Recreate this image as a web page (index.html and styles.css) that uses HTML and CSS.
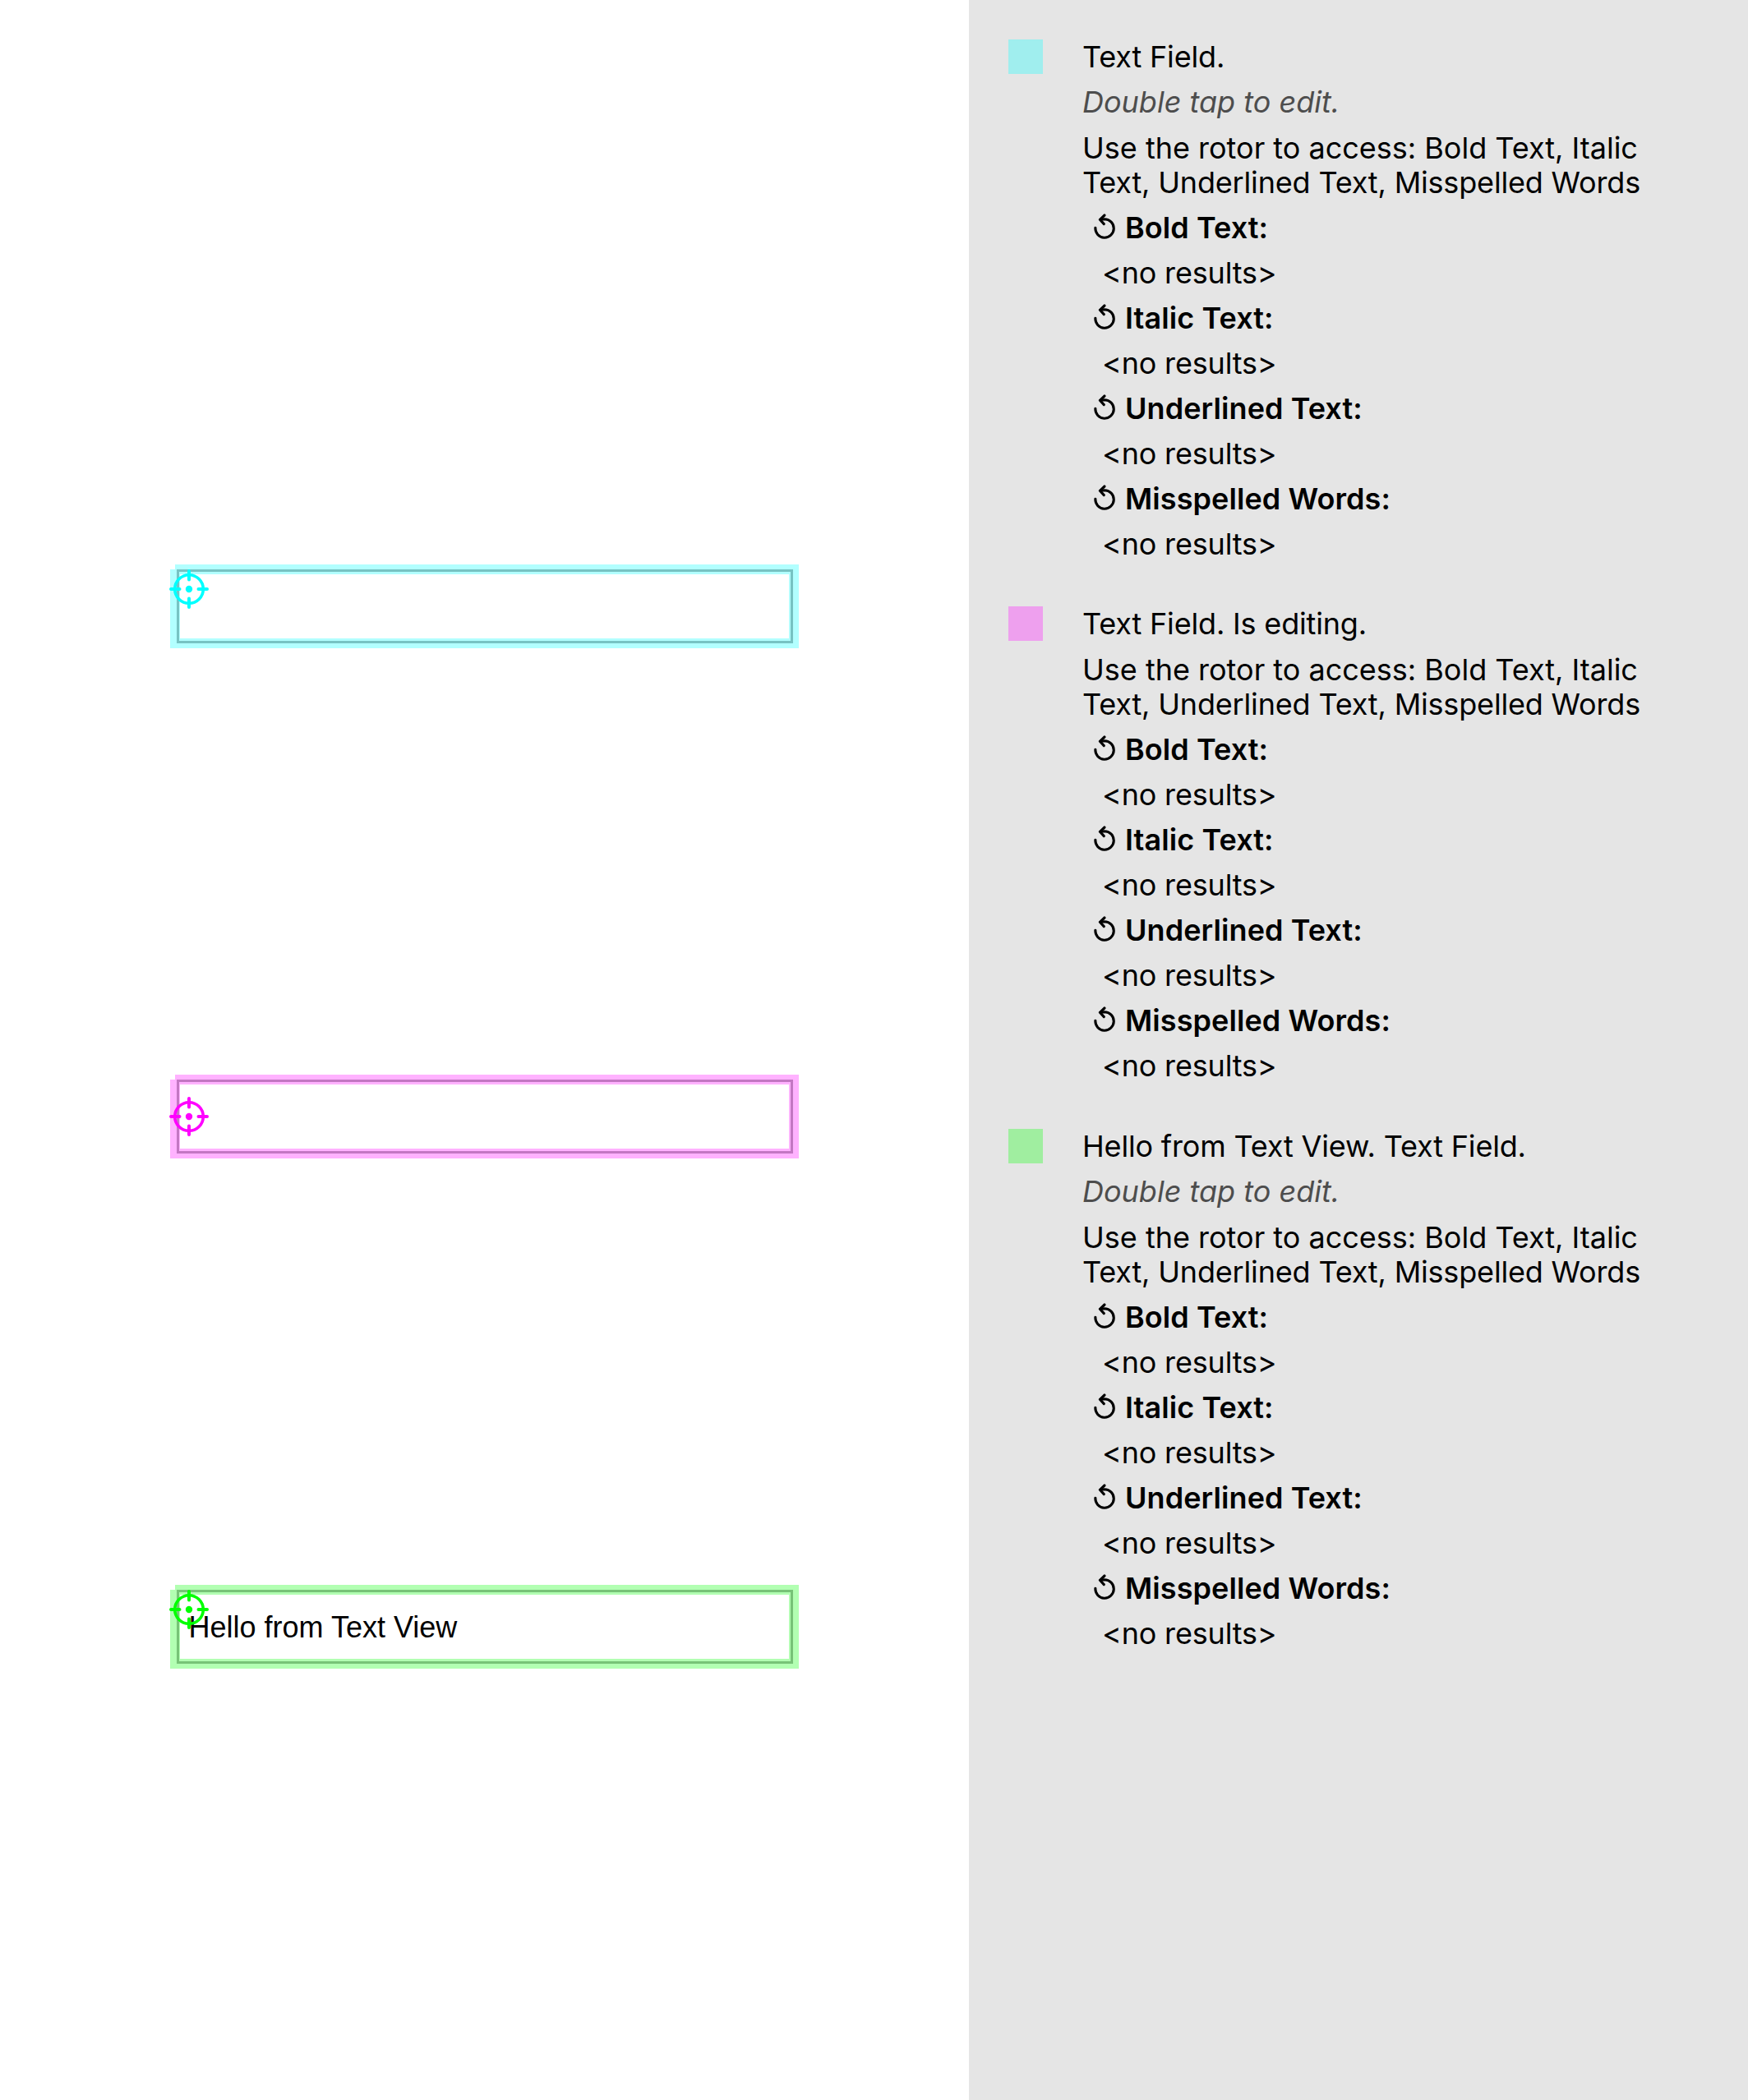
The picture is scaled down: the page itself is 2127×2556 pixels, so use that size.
FILE: index.html
```html
<!DOCTYPE html>
<html lang="en">
<head>
<meta charset="utf-8">
<title>Accessibility snapshot</title>
<link rel="stylesheet" href="styles.css">
</head>
<body>
<svg class="defs" width="0" height="0">
  <symbol id="target" viewBox="0 0 48 48">
    <g fill="none" stroke="currentColor" stroke-width="4" stroke-linecap="round">
      <circle cx="24" cy="24" r="17.3" stroke-width="3.6"/>
      <path d="M2 24H12.5M35.5 24H46M24 2V12.5M24 35.5V46"/>
    </g>
    <circle cx="24" cy="24" r="4.2" fill="currentColor"/>
  </symbol>
  <symbol id="rotor" viewBox="0 0 26 32">
    <g fill="none" stroke="currentColor" stroke-width="3.1" stroke-linecap="round" stroke-linejoin="round">
      <path d="M1.9 17.2A11.2 11.2 0 1 0 13.1 6.8L8 7.4"/>
      <path d="M13 2L7.4 7.3L12.3 12.6"/>
    </g>
  </symbol>
</svg>
<main class="page">
  <section class="device">
    <div class="field cyan"><svg class="target"><use href="#target"/></svg></div>
    <div class="field magenta"><svg class="target middle"><use href="#target"/></svg></div>
    <div class="field green"><span class="value">Hello from Text View</span><svg class="target"><use href="#target"/></svg></div>
  </section>
  <aside class="legend" id="legend"></aside>
</main>
<script src="legend.js"></script>
</body>
</html>
```
FILE: legend.js
```javascript
const rotors = ["Bold Text:", "Italic Text:", "Underlined Text:", "Misspelled Words:"];
const entries = [
  { color: "cyan", label: "Text Field.", hint: "Double tap to edit." },
  { color: "magenta", label: "Text Field. Is editing." },
  { color: "green", label: "Hello from Text View. Text Field.", hint: "Double tap to edit." }
];

document.getElementById("legend").innerHTML = entries.map(e => `
  <article class="entry">
    <div class="swatch ${e.color}"></div>
    <div class="details">
      <p class="label">${e.label}</p>
      ${e.hint ? `<p class="hint">${e.hint}</p>` : ""}
      <p class="access">Use the rotor to access: Bold Text, Italic<br><span class="tight">Text, Underlined Text, Misspelled Words</span></p>
      ${rotors.map(r => `
        <h3 class="rotor"><svg class="rotor-icon"><use href="#rotor"/></svg><span>${r}</span></h3>
        <p class="result">&lt;no results&gt;</p>`).join("")}
    </div>
  </article>`).join("");
```
FILE: styles.css
```css
* { box-sizing: border-box; }
body { margin: 0; background: #fff; color: #000; }
.defs { position: absolute; }
.page { display: flex; width: 2127px; height: 2556px; }

.device {
  width: 1179px;
  padding: 687px 0 0 207px;
  display: flex;
  flex-direction: column;
  gap: 519px;
}
.field {
  position: relative;
  width: 765px;
  height: 102px;
  display: flex;
  align-items: center;
  border: 12px solid var(--halo);
  padding-left: 10.5px;
}
/* grey control border, tinted by the highlight */
.field::before {
  content: "";
  position: absolute;
  inset: -6px -5px -6px -4px;
  border: 3px solid var(--edge);
}
/* notch where the highlight corner is open */
.field::after {
  content: "";
  position: absolute;
  left: -12px;
  top: -12px;
  width: 6px;
  height: 6px;
  background: #fff;
}
.field.cyan { --halo: #b2ffff; --edge: #77c3c3; color: #0ff; }
.field.magenta { --halo: #ffb2ff; --edge: #c377c3; color: #f0f; }
.field.green { --halo: #b2ffb2; --edge: #77c377; color: #0f0; }
.target {
  position: absolute;
  left: -13px;
  top: -6px;
  width: 48px;
  height: 48px;
}
.target.middle { top: 14.5px; }
.value {
  font: 36px/42px "Liberation Sans", Arial, sans-serif;
  padding-top: 2px;
  color: #000;
}

.legend {
  width: 948px;
  background: #e5e5e5;
  padding: 48px 0 0 48px;
  display: flex;
  flex-direction: column;
  gap: 54.3px;
  font: 36px/43px Inter, sans-serif;
}
.entry { display: flex; gap: 48px; }
.swatch { width: 42px; height: 42px; flex: none; }
.swatch.cyan { background: #a0eeee; }
.swatch.magenta { background: #eea0ee; }
.swatch.green { background: #a0eea0; }
.details { display: flex; flex-direction: column; gap: 12px; white-space: nowrap; }
.details p, .details h3 { margin: 0; font-size: 36px; }
.label, .tight, .result { letter-spacing: -0.17px; }
.hint { color: #4d4d4d; font-style: italic; }
.details .access { line-height: 42px; padding: 1px 0; }
.rotor { display: flex; gap: 12px; padding-left: 14px; font-weight: 600; letter-spacing: 0.08px; }
.rotor-icon { width: 26px; height: 32px; margin-top: 4px; }
.result { padding-left: 24px; }
```
